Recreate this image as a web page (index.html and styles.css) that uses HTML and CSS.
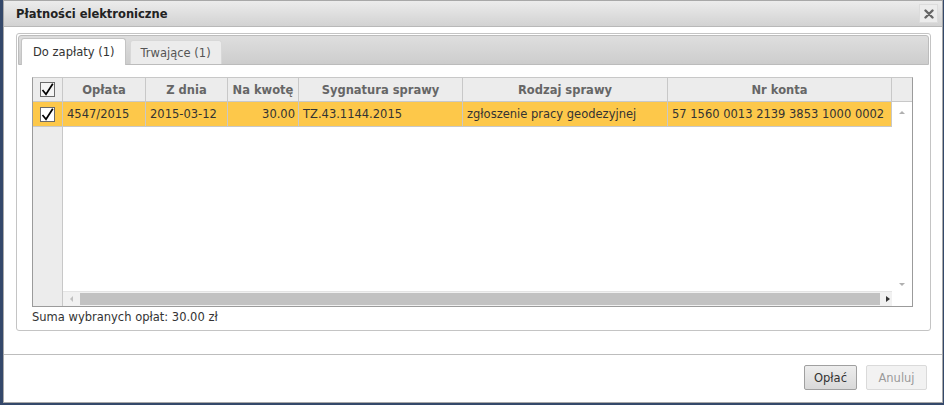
FILE: index.html
```html
<!DOCTYPE html>
<html lang="pl">
<head>
<meta charset="utf-8">
<link rel="stylesheet" href="styles.css">
</head>
<body>
<div class="dialog">
  <div class="titlebar">
    <span class="title">Płatności elektroniczne</span>
    <button class="close" aria-label="close">
      <svg width="10" height="10" viewBox="0 0 10 10"><path d="M1.5 1.5 L8.5 8.5 M8.5 1.5 L1.5 8.5" stroke="#666" stroke-width="2.4" stroke-linecap="round"/></svg>
    </button>
  </div>
  <div class="content">
    <div class="tabs">
      <div class="tabbar">
        <div class="tab active">Do zapłaty (1)</div>
        <div class="tab">Trwające (1)</div>
      </div>
      <div class="panel">
        <div class="grid">
          <div class="ghead">
            <div class="hc chk"><span class="cb"><svg width="13" height="13" viewBox="0 0 13 13"><path d="M1.5 7 L5 11.2 L11.8 0.8" fill="none" stroke="#000" stroke-width="1.7"/></svg></span></div>
            <div class="hc">Opłata</div>
            <div class="hc">Z dnia</div>
            <div class="hc">Na kwotę</div>
            <div class="hc">Sygnatura sprawy</div>
            <div class="hc">Rodzaj sprawy</div>
            <div class="hc">Nr konta</div>
            <div class="hc last"></div>
          </div>
          <div class="gbody">
            <div class="chkcol">
              <div class="chkcell"><span class="cb white"><svg width="13" height="13" viewBox="0 0 13 13"><path d="M1.5 7 L5 11.2 L11.8 0.8" fill="none" stroke="#000" stroke-width="1.7"/></svg></span></div>
            </div>
            <div class="scrollarea">
              <div class="rows">
                <div class="row">
                  <div class="c">4547/2015</div>
                  <div class="c">2015-03-12</div>
                  <div class="c num">30.00</div>
                  <div class="c">TZ.43.1144.2015</div>
                  <div class="c">zgłoszenie pracy geodezyjnej</div>
                  <div class="c">57 1560 0013 2139 3853 1000 0002</div>
                </div>
              </div>
              <div class="vscroll">
                <span class="arr up"></span>
                <span class="arr down"></span>
              </div>
              <div class="hscroll">
                <span class="harr left"></span>
                <span class="thumb"></span>
                <span class="harr right"></span>
              </div>
              <div class="corner"></div>
            </div>
          </div>
        </div>
        <div class="sum">Suma wybranych opłat: 30.00 zł</div>
      </div>
    </div>
  </div>
  <div class="footer">
    <button class="btn primary">Opłać</button>
    <button class="btn disabled">Anuluj</button>
  </div>
</div>
</body>
</html>
```
FILE: styles.css
```css
* { box-sizing: border-box; }
html, body { margin: 0; padding: 0; }
body {
  width: 944px;
  height: 405px;
  background: #34486a;
  font-family: "DejaVu Sans", Verdana, sans-serif;
  font-size: 11px;
  color: #333;
  overflow: hidden;
}
.dialog {
  margin-left: 3px;
  width: 940px;
  height: 403px;
  background: #fff;
  border: 1px solid #a8a8a8;
  display: flex;
  flex-direction: column;
}
.titlebar {
  height: 26px;
  flex: none;
  background: linear-gradient(#ececec, #d2d2d2);
  border-bottom: 1px solid #b8b8b8;
  display: flex;
  align-items: center;
  justify-content: space-between;
  padding: 0 4px 0 12px;
}
.title {
  font-weight: bold;
  font-size: 11.5px;
  color: #222;
}
.close {
  width: 19px;
  height: 19px;
  padding: 0;
  border: 1px solid #dcdcdc;
  background: #ececec;
  display: flex;
  align-items: center;
  justify-content: center;
}
.content {
  flex: none;
  height: 328px;
  padding: 6px 9px 0 12px;
  border-bottom: 1px solid #bdbdbd;
}
.tabs {
  width: 915px;
  height: 298px;
  border: 1px solid #c4c4c4;
  border-radius: 3px;
  padding: 1px;
  display: flex;
  flex-direction: column;
}
.tabbar {
  height: 30px;
  flex: none;
  background: linear-gradient(#dedede, #cdcdcd);
  border: 1px solid #bcbcbc;
  border-radius: 3px 3px 0 0;
  display: flex;
  align-items: flex-end;
  gap: 4px;
  padding-left: 2px;
}
.tab {
  height: 24px;
  padding: 0 10px;
  background: #ececec;
  border: 1px solid #d8d8d8;
  border-bottom: none;
  border-radius: 3px 3px 0 0;
  color: #555;
  font-size: 11.5px;
  display: flex;
  align-items: center;
  margin-bottom: 0;
}
.tab.active {
  height: 27px;
  margin-bottom: -1px;
  background: #fff;
  color: #333;
  border-color: #c4c4c4;
  padding: 0 10px 0 11px;
}
.panel {
  flex: 1;
  padding: 12px 16px 0 14px;
}
.grid {
  width: 881px;
  height: 230px;
  border: 1px solid #9b9b9b;
  border-top-color: #c8c8c8;
  display: flex;
  flex-direction: column;
}
.ghead {
  display: grid;
  grid-template-columns: 30px 83px 82px 71px 164px 205px 224px 1fr;
  height: 24px;
  background: #ececec;
  border-bottom: 1px solid #c8c8c8;
  flex: none;
}
.hc {
  border-right: 1px solid #c8c8c8;
  display: flex;
  align-items: center;
  justify-content: center;
  font-weight: bold;
  color: #666;
  font-size: 11.5px;
}
.hc.last { border-right: none; }
.cb {
  width: 15px;
  height: 15px;
  border: 1px solid #6a6a6a;
  background: #f4f4f4;
  display: flex;
  align-items: center;
  justify-content: center;
}
.cb.white { background: #fff; }
.gbody {
  flex: 1;
  display: flex;
  min-height: 0;
}
.chkcol {
  width: 30px;
  flex: none;
  background: #ececec;
  border-right: 1px solid #c8c8c8;
}
.chkcell {
  height: 25px;
  background: #fdc84a;
  border-bottom: 1px solid #c8c8c8;
  display: flex;
  align-items: center;
  justify-content: center;
}
.scrollarea {
  flex: 1;
  display: grid;
  grid-template-columns: 1fr 20px;
  grid-template-rows: 1fr 15px;
}
.rows { overflow: hidden; }
.row {
  display: grid;
  grid-template-columns: 83px 82px 71px 164px 205px 224px;
  height: 25px;
  background: #fdc84a;
  border-bottom: 1px solid #c8c8c8;
}
.c {
  border-right: 1px solid #c8c8c8;
  padding: 0 4px;
  display: flex;
  align-items: center;
  white-space: nowrap;
  color: #333;
  font-size: 11.5px;
}
.c.num { justify-content: flex-end; padding-right: 3px; }
.vscroll {
  background: #fff;
  display: flex;
  flex-direction: column;
  justify-content: space-between;
  align-items: center;
  padding: 9px 0 5px;
}
.arr {
  width: 0;
  height: 0;
  border-left: 3px solid transparent;
  border-right: 3px solid transparent;
}
.arr.up { border-bottom: 3px solid #b0b0b0; }
.arr.down { border-top: 3px solid #b0b0b0; }
.hscroll {
  background: #f1f1f1;
  display: flex;
  align-items: center;
  border-top: 1px solid #e4e4e4;
  margin-right: -3px;
}
.harr {
  width: 0;
  height: 0;
  border-top: 3px solid transparent;
  border-bottom: 3px solid transparent;
}
.harr.left { border-right: 3px solid #c0c0c0; margin: 0 7px 0 7px; }
.harr.right { border-left: 4px solid #333; margin: 0 5px 0 6px; }
.thumb {
  flex: 1;
  height: 12px;
  background: #c2c2c2;
}
.corner { background: #fff; }
.sum {
  margin-top: 3px;
  font-size: 11.5px;
  color: #333;
}
.footer {
  flex: 1;
  display: flex;
  justify-content: flex-end;
  align-items: flex-start;
  gap: 9px;
  padding: 10px 15px 0 0;
}
.btn {
  height: 25px;
  font-family: "DejaVu Sans", Verdana, sans-serif;
  font-size: 11.5px;
  border-radius: 2px;
  padding: 0;
}
.btn.primary {
  width: 53px;
  background: linear-gradient(#ededed, #d9d9d9);
  border: 1px solid #a0a0a0;
  color: #333;
}
.btn.disabled {
  width: 61px;
  background: #f2f2f2;
  border: 1px solid #dadada;
  color: #9a9a9a;
}
```
